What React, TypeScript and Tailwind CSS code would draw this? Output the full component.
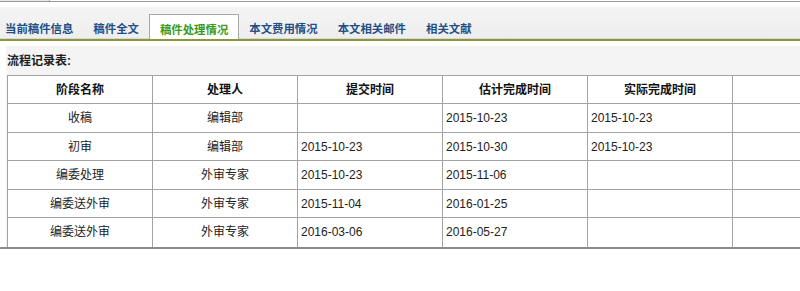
import React from "react";

const tabs = ["当前稿件信息", "稿件全文", "稿件处理情况", "本文费用情况", "本文相关邮件", "相关文献"];

const rows: { stage: string; who: string; sub: string; est: string; act: string; h: number }[] = [
  { stage: "收稿", who: "编辑部", sub: "", est: "2015-10-23", act: "2015-10-23", h: 29 },
  { stage: "初审", who: "编辑部", sub: "2015-10-23", est: "2015-10-30", act: "2015-10-23", h: 28 },
  { stage: "编委处理", who: "外审专家", sub: "2015-10-23", est: "2015-11-06", act: "", h: 29 },
  { stage: "编委送外审", who: "外审专家", sub: "2015-11-04", est: "2016-01-25", act: "", h: 28 },
  { stage: "编委送外审", who: "外审专家", sub: "2016-03-06", est: "2016-05-27", act: "", h: 29 },
];

const font = { fontFamily: '"Liberation Sans", "Noto Sans CJK SC", sans-serif' };

export default function App() {
  return (
    <div className="w-[800px] h-[291px] bg-white overflow-hidden text-[12px]" style={font}>
      {/* top strip */}
      <div className="h-[7px] relative">
        <div className="h-[1px] w-[50px] bg-[#e8e8e8] border-r border-[#b0b0b0]" />
        <div className="h-[1px] bg-[#9a9a9a]" />
      </div>
      {/* tab bar */}
      <div className="h-[32px] bg-gradient-to-b from-[#f4f4f4] to-[#eeeeee] flex items-end border-b border-[#d8d8d8]">
        {tabs.map((t, i) => {
          const active = i === 2;
          return (
            <div
              key={t}
              className={
                "h-[25px] flex items-center font-bold whitespace-nowrap text-[11.4px] " +
                (i === 0 ? "pl-[5px] pr-[10px] " : "px-[10px] ") +
                (active
                  ? "bg-white border border-b-0 border-[#a8a8a8] text-[#3b9a1c] -mb-[1px]"
                  : "text-[#234f86]")
              }
            >
              <span className="pt-[8px]">{t}</span>
            </div>
          );
        })}
      </div>
      <div className="h-[2px] bg-[#8c9540]" />
      <div className="h-[5px]" />
      {/* panel */}
      <div className="ml-[6px] bg-[#f4f4f4] w-[900px]">
        <div className="h-[29px] flex items-center pl-[1px] font-bold text-[#222]">流程记录表:</div>
        <table className="border-collapse bg-white text-[#222] ml-[1px]" style={{ tableLayout: "fixed", width: 870 }}>
          <colgroup>
            <col style={{ width: 145 }} />
            <col style={{ width: 145 }} />
            <col style={{ width: 145 }} />
            <col style={{ width: 145 }} />
            <col style={{ width: 145 }} />
            <col style={{ width: 145 }} />
          </colgroup>
          <thead>
            <tr style={{ height: 28 }}>
              {["阶段名称", "处理人", "提交时间", "估计完成时间", "实际完成时间", ""].map((h, i) => (
                <th key={i} className="border border-[#a3a3a3] font-bold text-center p-0 text-[#111]">
                  {h}
                </th>
              ))}
            </tr>
          </thead>
          <tbody>
            {rows.map((r, i) => {
              const last = i === rows.length - 1;
              const cell = "border border-[#a3a3a3] p-0 " + (last ? "border-b-0 " : "");
              return (
                <tr key={i} style={{ height: r.h }}>
                  <td className={cell + "text-center"}>{r.stage}</td>
                  <td className={cell + "text-center"}>{r.who}</td>
                  <td className={cell + "pl-[3px]"}>{r.sub}</td>
                  <td className={cell + "pl-[3px]"}>{r.est}</td>
                  <td className={cell + "pl-[3px]"}>{r.act}</td>
                  <td className={cell}></td>
                </tr>
              );
            })}
          </tbody>
        </table>
      </div>
      <div className="h-[2px] bg-[#8a8a8a]" />
    </div>
  );
}
